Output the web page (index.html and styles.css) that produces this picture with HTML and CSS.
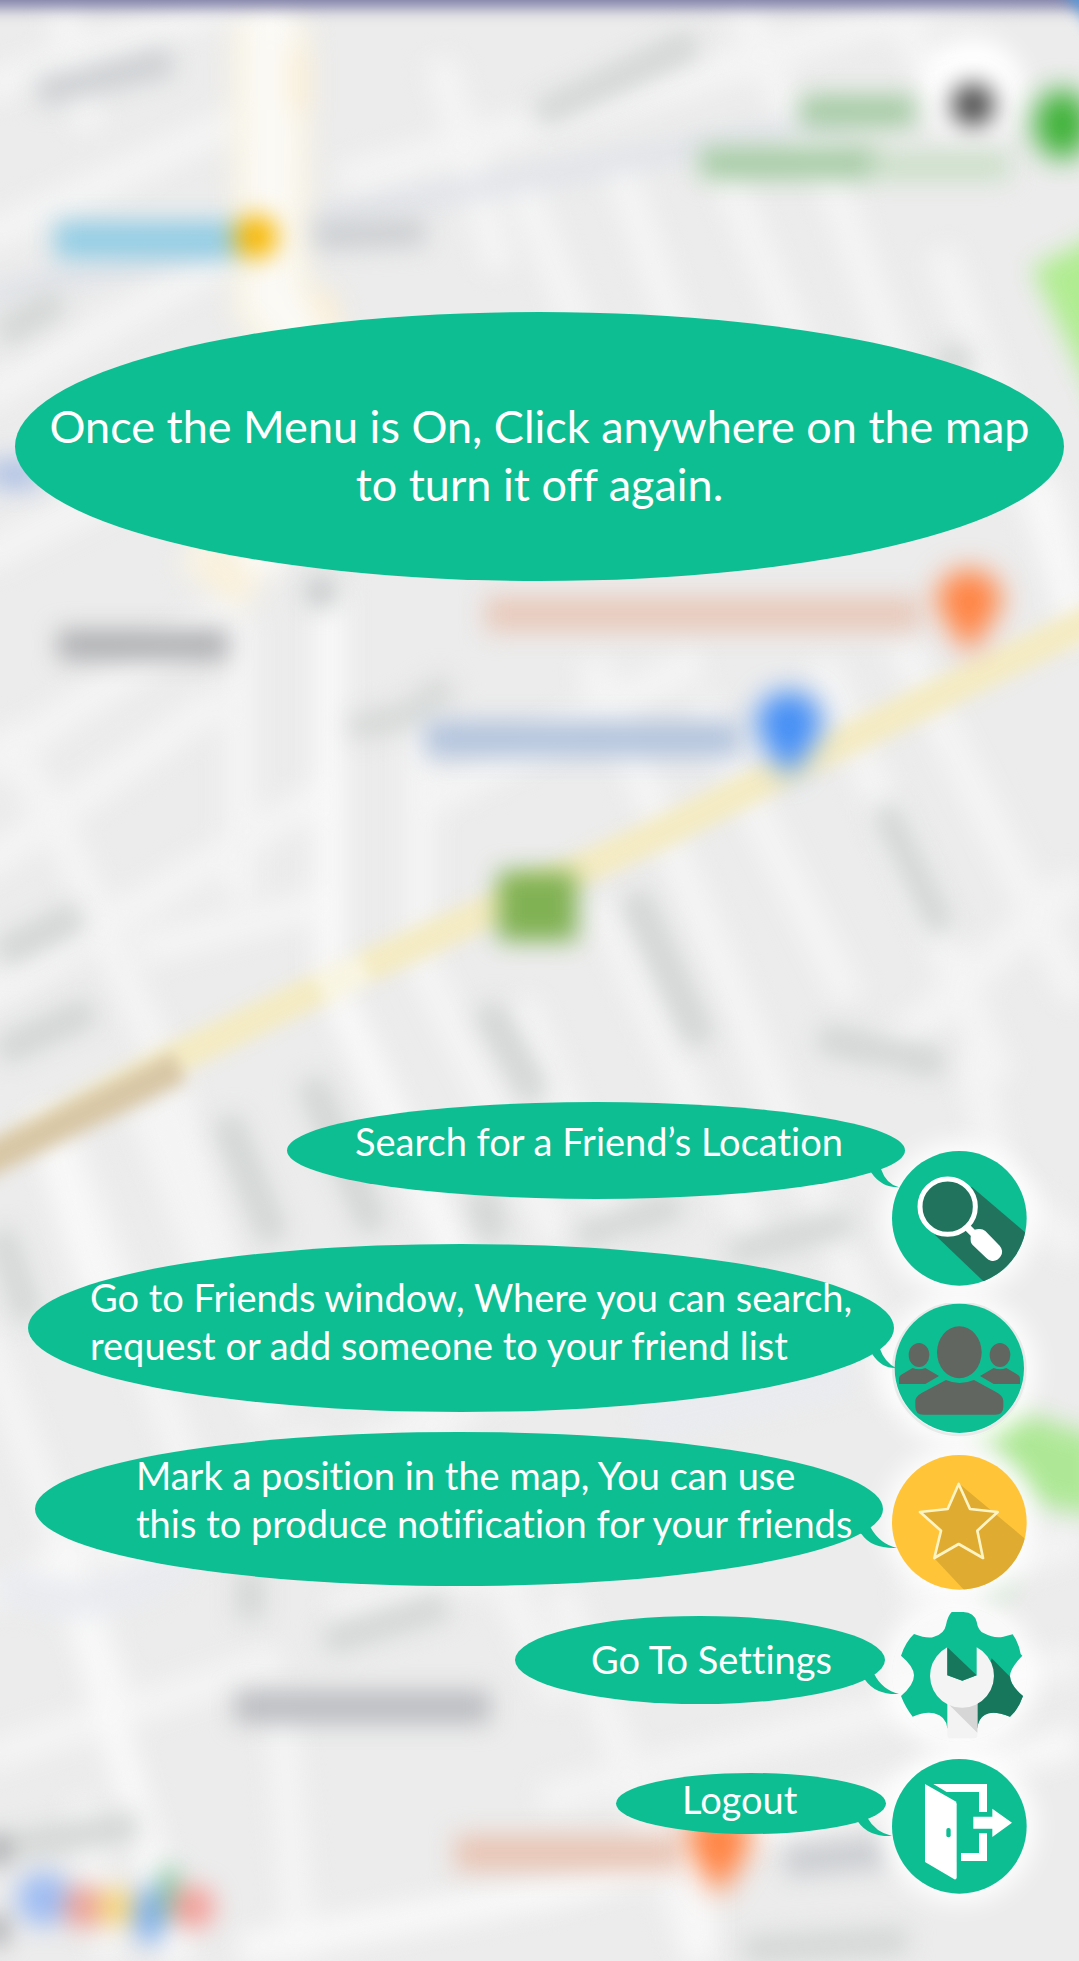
FILE: index.html
```html
<!DOCTYPE html>
<html lang="en">
<head>
<meta charset="utf-8">
<meta name="viewport" content="width=device-width, initial-scale=1">
<title>Map menu guide</title>
<link rel="stylesheet" href="styles.css">
</head>
<body>
<div class="screen">
  <svg class="map" viewBox="0 0 1079 1961" preserveAspectRatio="xMidYMid slice" aria-hidden="true">
    <defs>
      <filter id="streets" filterUnits="userSpaceOnUse" x="-60" y="-60" width="1200" height="2080" color-interpolation-filters="sRGB"><feGaussianBlur stdDeviation="12"/></filter>
      <filter id="road" filterUnits="userSpaceOnUse" x="-60" y="-60" width="1200" height="2080" color-interpolation-filters="sRGB"><feGaussianBlur stdDeviation="8"/></filter>
      <filter id="labels" filterUnits="userSpaceOnUse" x="-60" y="-60" width="1200" height="2080" color-interpolation-filters="sRGB"><feGaussianBlur stdDeviation="12"/></filter>
      <filter id="pins" filterUnits="userSpaceOnUse" x="-60" y="-60" width="1200" height="2080" color-interpolation-filters="sRGB"><feGaussianBlur stdDeviation="14"/></filter>
    </defs>
    <rect width="1079" height="1961" fill="#ececec"/>
    <g filter="url(#streets)" fill="none">
      <!-- side streets -->
      <g stroke="#f4f4f4" stroke-width="32">
        <path d="M60 0L90 130M440 60L500 270M520 180L580 330M620 170L680 340M720 160L800 350M820 150L900 370M940 250L1079 620M740 0L810 160M900 20L940 90"/>
        <path d="M-20 90L240 0M-20 240L260 110M-20 400L240 250M380 170L1079 -40M-20 560L260 420M340 180L760 60"/>
        <path d="M-20 770L240 600M-20 870L220 700M-20 1000L330 790M0 730L60 830L170 1080L270 1420M140 950L340 900M240 620V900"/>
        <path d="M590 660L720 960L900 1400M700 700L850 1000M820 660L1000 1080M900 640L1079 1000M420 700V960L560 1240M430 800L700 660M520 1000L620 1240M1079 880L880 1060M600 900L760 1250M970 1050L1000 1180L1079 1250"/>
        <path d="M60 1130L200 1500M140 1100L260 1400M-20 1320L120 1700M-20 1600L320 1440M100 1560L480 1400M420 1400L560 1700M560 1590L700 1961M280 1700L300 1961M80 1800L110 1961M-20 1760L280 1660M540 1800L1079 1660M330 1610L780 1500M900 1600L1079 1540"/>
      </g>
      <g stroke="#f8f8f8" stroke-width="32">
        <path d="M330 590V980L440 1220L520 1400M240 1950L560 1890L1079 1740M700 1840V1961M60 1540L180 1961M40 1110L100 1300M1040 480L1079 640"/>
      </g>
      <path d="M-20 298L410 200L850 120" stroke="#dfe2e8" stroke-width="20"/>
      <path d="M0 1580C80 1620 150 1590 190 1550M640 1425L850 1375" stroke="#e9ebf0" stroke-width="34"/>
      <path d="M270 20L272 300L300 330L230 560L210 590" stroke="#f8f3e4" stroke-width="80"/>
      <path d="M270 0L272 300L310 340L260 570" stroke="#fbfaf6" stroke-width="44"/>
      <path d="M300 50V110M322 290L330 330M210 560L240 590" stroke="#faefd8" stroke-width="24"/>
      <path d="M1032 268L1110 230V430Z" fill="#b0ec91"/>
      <path d="M970 1425L1000 1405L1100 1438V1516L1035 1504Z" fill="#aee896"/>
      <path d="M985 1605L1010 1575" stroke="#d3e6d4" stroke-width="24"/>
      <circle cx="973" cy="90" r="52" fill="#fff"/>
    </g>
    <g filter="url(#road)" fill="none">
      <path d="M1100 616L790 768L654 836L344 977L172 1060L-40 1174" stroke="#f4ebc3" stroke-width="33"/>
      <path d="M320 990L365 967" stroke="#f8f5e2" stroke-width="33"/>
      <path d="M-40 1174L180 1067" stroke="#d8c7a6" stroke-width="33"/>
    </g>
    <rect x="-60" y="-60" width="1200" height="68" fill="#7c7ca6" filter="url(#road)"/>
    <path d="M1050 -30L1110 50V-30Z" fill="#4f9ade" filter="url(#road)"/>
    <!-- place and street labels, out of focus -->
    <g filter="url(#labels)" fill="none" stroke-width="28">
      <path d="M38 93L172 61M315 236L425 232" stroke="#cbced1"/>
      <path d="M537 115L610 82L695 42M0 335L60 300M940 355L970 365" stroke="#d1d5d3"/>
      <path d="M800 111H915M700 163H880" stroke="#a5cba4" stroke-width="32"/>
      <path d="M870 166H1010" stroke="#cbdfc8"/>
      <path d="M55 240H240" stroke="#93cde4" stroke-width="38"/>
      <path d="M-10 474H40" stroke="#b0c2e4" stroke-width="30"/>
      <path d="M58 645H228" stroke="#aeafb2" stroke-width="30"/>
      <path d="M320 578L322 606" stroke="#c2c5c6"/>
      <path d="M485 614H920" stroke="#e8cabc" stroke-width="36"/>
      <path d="M425 739H740" stroke="#b3c4dd" stroke-width="36"/>
      <path d="M350 728L400 718L450 685" stroke="#d6d9d7"/>
      <path d="M883 807L943 931M633 894L702 1043M486 1006L537 1097M819 1038L943 1064M226 1118L275 1240M310 1080L375 1230M0 954L80 915M0 1052L92 1010M480 1190L495 1240" stroke="#d0d4d2"/>
      <path d="M578 1237L681 1204M729 1254L853 1221M0 1230L30 1320M250 1570V1620M325 1642L447 1605M0 1848L138 1825M743 1950L908 1940" stroke="#d3d6d5"/>
      <path d="M235 1707H490" stroke="#b9bbbf" stroke-width="32"/>
      <path d="M455 1853H680" stroke="#e8c5b5" stroke-width="36"/>
      <path d="M785 1862L888 1852" stroke="#c9ccd0" stroke-width="30"/>
      <path d="M-12 1850H6M-12 1930H6" stroke="#95979a"/>
      <g stroke="none">
        <circle cx="973" cy="105" r="22" fill="#4e4e4e"/>
        <circle cx="256" cy="237" r="22" fill="#f8b800"/>
        <rect x="498" y="871" width="79" height="70" rx="4" fill="#80b153"/>
        <circle cx="44" cy="1899" r="27" fill="#9fbdf2"/>
        <circle cx="85" cy="1907" r="22" fill="#eba39b"/>
        <circle cx="116" cy="1907" r="19" fill="#f6d67c"/>
        <ellipse cx="150" cy="1915" rx="16" ry="29" fill="#80afee"/>
        <path d="M160 1868H178V1920H160Z" fill="#80c49c"/>
        <circle cx="193" cy="1907" r="22" fill="#f3a19b"/>
      </g>
    </g>
    <g filter="url(#pins)">
      <ellipse cx="1062" cy="124" rx="28" ry="35" fill="#3fb239"/>
      <path d="M936 602A33 33 0 0 1 1002 602Q992 624 969 654Q946 624 936 602Z" fill="#ff8444"/>
      <path d="M756 724A33 33 0 0 1 822 724Q814 748 789 778Q764 748 756 724Z" fill="#458ff5"/>
      <path d="M686 1842A33 33 0 0 1 752 1842Q742 1864 719 1896Q696 1864 686 1842Z" fill="#ff8444"/>
    </g>
  </svg>

  <main class="guide">
    <p class="hint">Once the Menu is On, Click anywhere on the map<br>to turn it off again.</p>

    <ul class="menu">
      <li class="item search">
        <button class="action" type="button" aria-labelledby="tip-search">
          <svg viewBox="96 93 405 405" aria-hidden="true">
            <clipPath id="disc"><circle cx="298" cy="295" r="202"/></clipPath>
            <circle cx="298" cy="295" r="202" fill="#0dbe93"/>
            <path d="M335 200L520 358V520H408L225 345Z" fill="#22735e" clip-path="url(#disc)"/>
            <circle cx="263" cy="260" r="83" fill="#22735e" stroke="#fff" stroke-width="15"/>
            <path d="M318 318L345 345" stroke="#fff" stroke-width="22"/>
            <path d="M332 350Q334 328 356 327Q368 326 376 333L419 377Q432 392 422 409Q411 426 393 422Q385 420 379 414L338 375Q330 367 332 350Z" fill="#fff"/>
          </svg>
        </button>
        <svg class="tail" viewBox="0 0 102 57" aria-hidden="true"><path d="M18 10Q50 57 102 55Q63 45 48 0L20 -20L-10 -5Z"/></svg>
        <span class="tip" id="tip-search">Search for a Friend’s Location</span>
      </li>
      <li class="item friends">
        <button class="action" type="button" aria-labelledby="tip-friends">
          <svg viewBox="96 549 405 405" aria-hidden="true">
            <circle cx="298" cy="747" r="198" fill="none" stroke="#e8eaea" stroke-width="8"/>
            <circle cx="298" cy="745" r="194" fill="#0dbe93"/>
            <g fill="#616661">
              <ellipse cx="298" cy="697" rx="67" ry="78"/>
              <ellipse cx="177" cy="705" rx="31" ry="36"/>
              <ellipse cx="420" cy="705" rx="31" ry="36"/>
              <path d="M258 780Q298 798 342 780L408 816Q430 828 430 842V860Q430 884 406 884H190Q166 884 166 860V842Q166 830 186 818Z"/>
              <path d="M117 792V775Q117 768 126 763L158 744Q177 752 196 744L237 768L196 792Z"/>
              <path d="M480 792V775Q480 768 471 763L439 744Q420 752 401 744L360 768L401 792Z"/>
            </g>
          </svg>
        </button>
        <svg class="tail" viewBox="0 0 102 57" aria-hidden="true"><path d="M30 14Q58 58 102 57Q68 40 54 0L30 -20L0 0Z"/></svg>
        <span class="tip" id="tip-friends">Go to Friends window, Where you can search,<br>request or add someone to your friend list</span>
      </li>
      <li class="item mark">
        <button class="action" type="button" aria-labelledby="tip-mark">
          <svg viewBox="96 75 405 405" aria-hidden="true">
            <clipPath id="coin"><circle cx="298" cy="277" r="202"/></clipPath>
            <circle cx="298" cy="277" r="202" fill="#ffc437"/>
            <path d="M296 160L520 347V500H331L223 385L243 302L179 246L263 237Z" fill="#dfac31" clip-path="url(#coin)"/>
            <path d="M296 162L330 237L413 246L352 302L369 384L296 342L223 384L243 302L180 246L263 237Z" fill="#dfac31" stroke="#fff4c4" stroke-width="8" stroke-linejoin="round"/>
          </svg>
        </button>
        <svg class="tail" viewBox="0 0 102 57" aria-hidden="true"><path d="M-4 16Q26 60 102 57Q50 45 22 -6L0 -24L-30 0Z"/></svg>
        <span class="tip" id="tip-mark">Mark a position in the map, You can use<br>this to produce notification for your friends</span>
      </li>
      <li class="item settings">
        <button class="action" type="button" aria-labelledby="tip-settings">
          <svg viewBox="96 51 405 405" aria-hidden="true">
            <path d="M275 66H310Q343 68 350 95Q354 122 372 130Q405 147 430 140L458 133Q476 158 482 192L487 197Q450 235 450 258Q450 285 489 318Q475 358 450 380Q400 360 375 374Q355 385 352 415H262Q258 378 222 370Q195 364 158 380Q136 352 123 318Q162 285 162 256Q162 230 123 197Q137 155 162 132Q205 148 222 140Q253 132 258 105Q263 78 275 66Z" fill="#0dbe93"/>
            <path d="M395 205L450 260Q452 287 489 318Q475 358 450 380Q400 360 375 374Q355 385 352 415V330Z" fill="#17775c"/>
            <path d="M262 335H352V436Q352 445 342 445H272Q262 445 262 434Z" fill="#f3f3f3"/>
            <path d="M266 343Q307 358 352 338V428Z" fill="#d6d6d6"/>
            <path d="M262 172A96 96 0 1 0 350 172V256L307 272L262 256Z" fill="#f4f4f4"/>
            <path d="M262 172L350 256L307 272L262 256Z" fill="#17775c"/>
          </svg>
        </button>
        <svg class="tail" viewBox="0 0 102 57" aria-hidden="true"><path d="M0 14Q32 60 102 57Q52 45 28 -2L0 -20L-30 0Z"/></svg>
        <span class="tip" id="tip-settings">Go To Settings</span>
      </li>
      <li class="item logout">
        <button class="action" type="button" aria-labelledby="tip-logout">
          <svg viewBox="96 57 405 405" aria-hidden="true">
            <circle cx="298" cy="259" r="202" fill="#0dbe93"/>
            <g fill="#fff">
              <path d="M195 132L286 184Q290 187 290 193V412Q290 420 283 418L195 366Z"/>
              <path d="M220 132H381V216H357V156H260Z"/>
              <path d="M357 280H381V363H303V339H357Z"/>
              <path d="M340 230H397V206L456 248L397 291V266H340Z"/>
            </g>
            <rect x="259" y="264" width="13" height="28" rx="6" fill="#0dbe93"/>
          </svg>
        </button>
        <svg class="tail" viewBox="0 0 102 57" aria-hidden="true"><path d="M0 14Q32 60 102 57Q52 45 28 2L0 -14L-30 0Z"/></svg>
        <span class="tip" id="tip-logout">Logout</span>
      </li>
    </ul>
  </main>
</div>
</body>
</html>
```
FILE: styles.css
```css
* {
  box-sizing: border-box;
}

body {
  margin: 0;
  background: #ececec;
  color: #fff;
  font-family: Lato, "Noto Sans", sans-serif;
  font-variant-ligatures: none;
}

.screen {
  position: relative;
  min-height: 100vh;
  overflow: hidden;
}

/* blurred map behind the guide */
.map {
  position: absolute;
  inset: 0;
  width: 100%;
  height: 100%;
}

.guide {
  position: relative;
  display: flex;
  flex-direction: column;
  gap: 570px;
  padding: 312px 15px 66px;
}

.hint {
  margin: 0;
  padding: 85px 0 68px;
  border-radius: 50%;
  background: #0dbe93;
  font-size: 45px;
  line-height: 58px;
  text-align: center;
}

.menu {
  display: flex;
  flex-direction: column;
  align-items: flex-end;
  gap: 17px;
  margin: 0;
  padding: 0 37px 0 0;
  list-style: none;
  isolation: isolate;
}

.item {
  position: relative;
}

/* white glow, kept under every button and bubble */
.item::before {
  content: "";
  position: absolute;
  inset: 0;
  z-index: -1;
  border-radius: 50%;
  background: rgba(255, 255, 255, 0.7);
  box-shadow: 0 0 24px 10px rgba(255, 255, 255, 0.9);
}

.action {
  display: block;
  width: 135px;
  height: 135px;
  padding: 0;
  border: 0;
  border-radius: 50%;
  background: none;
  cursor: pointer;
}

.action svg {
  display: block;
  width: 100%;
  height: 100%;
}

/* speech bubbles floating beside each action */
.tip {
  position: absolute;
  border-radius: 50%;
  background: #0dbe93;
  font-size: 38px;
  line-height: 48px;
  white-space: nowrap;
}

.tail {
  position: absolute;
  width: 34px;
  height: 19px;
  overflow: visible;
  fill: #0dbe93;
}

.search .tip {
  top: -49px;
  right: 122px;
  width: 618px;
  height: 97px;
  padding: 15px 0 0 68px;
}

.search .tail {
  top: 18px;
  right: 128px;
}

.friends .tip {
  top: -59px;
  right: 133px;
  width: 866px;
  height: 168px;
  padding: 29px 0 0 62px;
}

.friends .tail {
  top: 46px;
  right: 131px;
}

.mark .tip {
  top: -23px;
  right: 144px;
  width: 848px;
  height: 154px;
  padding: 19px 0 0 101px;
}

.mark .tail {
  top: 74px;
  right: 130px;
}

.settings .tip {
  top: 9px;
  right: 142px;
  width: 370px;
  height: 88px;
  padding: 19px 0 0 76px;
}

.settings .tail {
  top: 68px;
  right: 128px;
}

.logout .tip {
  top: 14px;
  right: 141px;
  width: 270px;
  height: 61px;
  padding: 2px 0 0 66px;
}

.logout .tail {
  top: 58px;
  right: 135px;
}
```
